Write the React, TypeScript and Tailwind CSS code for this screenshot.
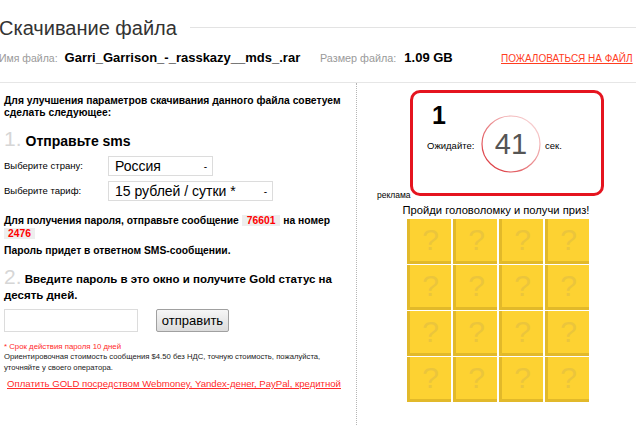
import React from "react";

const ari = { fontFamily: '"Liberation Sans", Arial, sans-serif' };

function Tile() {
  return (
    <div className="w-[44px] h-[45px] bg-[#fdd232] border-l-[3px] border-b-[3px] border-[#e2b92a] flex items-center justify-center">
      <span className="text-[30px] leading-none text-[#ebc53c]" style={ari}>?</span>
    </div>
  );
}

export default function App() {
  return (
    <div className="w-[640px] h-[425px] overflow-hidden bg-white text-black" style={ari}>
      <div className="flex items-center pt-[13px] h-[42px]">
        <div className="text-[20px] leading-none text-[#333] whitespace-nowrap ml-[-1px]">Скачивание файла</div>
        <div className="flex-1 h-px bg-[#e3e3e3] ml-[13px] mr-[4px]" />
      </div>
      <div className="flex items-baseline h-[40px] pt-[6px] whitespace-nowrap">
        <div className="w-[320px] flex items-baseline">
          <span className="text-[10.5px] text-[#9a9a9a] ml-[-1px]">Имя файла:</span>
          <span className="text-[13px] font-bold ml-[7px]">Garri_Garrison_-_rasskazy__mds_.rar</span>
        </div>
        <div className="w-[181px] flex items-baseline">
          <span className="text-[10.8px] text-[#9a9a9a]">Размер файла:</span>
          <span className="text-[13px] font-bold ml-[8px]">1.09 GB</span>
        </div>
        <a className="text-[10px] text-[#ff3d1f] underline">ПОЖАЛОВАТЬСЯ НА ФАЙЛ</a>
      </div>
      <div className="h-px bg-[#e6e6e6] mr-[4px]" />
      <div className="flex h-[342px]">
        <div className="w-[357px] border-r border-dotted border-[#b5b5b5] pl-[4px] pr-[10px] overflow-hidden">
          <p className="text-[10.3px] font-bold leading-[12px] mt-[12px]">
            Для улучшения параметров скачивания данного файла советуем сделать следующее:
          </p>
          <div className="flex items-baseline mt-[9px] h-[21px]">
            <span className="text-[21px] text-[#d6d6d6] leading-none">1.</span>
            <span className="text-[14px] font-bold ml-[4px] leading-none">Отправьте sms</span>
          </div>
          <div className="flex items-center mt-[7px] h-[20px]">
            <span className="text-[9.5px] w-[104px]">Выберите страну:</span>
            <div className="w-[105px] h-[20px] border border-[#dcdcdc] flex items-center justify-between pl-[6px] pr-[5px]">
              <span className="text-[14px]">Россия</span>
              <span className="text-[10px]">-</span>
            </div>
          </div>
          <div className="flex items-center mt-[5px] h-[20px]">
            <span className="text-[9.5px] w-[104px]">Выберите тариф:</span>
            <div className="w-[165px] h-[20px] border border-[#dcdcdc] flex items-center justify-between pl-[6px] pr-[5px]">
              <span className="text-[14px]">15 рублей / сутки *</span>
              <span className="text-[10px]">-</span>
            </div>
          </div>
          <p className="text-[10.3px] font-bold leading-[13px] mt-[13px]">
            Для получения пароля, отправьте сообщение{" "}
            <span className="bg-[#eeeeee] text-[#ff0000] px-[5px]">76601</span> на номер{" "}
            <span className="bg-[#eeeeee] text-[#ff0000] px-[4px]">2476</span>
          </p>
          <p className="text-[10.3px] font-bold leading-[13px] mt-[4px]">Пароль придет в ответном SMS-сообщении.</p>
          <div className="mt-[12px] text-[11.5px] font-bold leading-[16px]">
            <span className="text-[21px] text-[#d6d6d6] font-normal leading-[16px] align-[-1px]">2.</span>{" "}
            Введите пароль в это окно и получите Gold статус на десять дней.
          </div>
          <div className="flex items-center mt-[6px]">
            <div className="w-[134px] h-[23px] border border-[#dcdcdc]" />
            <button className="ml-[18px] w-[73px] h-[23px] border border-[#a0a0a0] rounded-[2px] bg-gradient-to-b from-[#f6f6f6] to-[#dcdcdc] text-[13px]">отправить</button>
          </div>
          <p className="text-[7.8px] text-[#ff2a2a] mt-[9px] leading-[11px]">* Срок действия пароля 10 дней</p>
          <p className="text-[7.7px] leading-[10.5px] text-[#222]">
            Ориентировочная стоимость сообщения $4.50 без НДС, точную стоимость, пожалуйста, уточняйте у своего оператора.
          </p>
          <div className="h-[17px] overflow-hidden mt-[4px] pl-[3px] mr-[-8px]">
            <a className="text-[9.6px] text-[#ff2a2a] underline leading-[14px] block">
              Оплатить GOLD посредством Webmoney, Yandex-денег, PayPal, кредитной картой и т.д.
            </a>
          </div>
        </div>
        <div className="flex-1 flex flex-col">
          <div className="ml-[53px] mt-[7px] w-[194px] h-[106px] border-[3px] border-[#e5141f] rounded-[10px] pl-[14px] pt-[10px]">
            <div className="text-[25px] font-bold leading-none ml-[5px]">1</div>
            <div className="flex items-center mt-[-9px]">
              <span className="text-[9.5px] w-[54px]">Ожидайте:</span>
              <div className="relative w-[60px] h-[58px] mt-[-4px] flex items-center justify-center">
                <svg className="absolute inset-0" width="60" height="58" viewBox="0 0 60 58">
                  <defs>
                    <linearGradient id="cg" x1="0" y1="1" x2="1" y2="0">
                      <stop offset="0" stopColor="#d9252c" />
                      <stop offset="0.5" stopColor="#ea8a8d" />
                      <stop offset="1" stopColor="#fbe5e6" />
                    </linearGradient>
                  </defs>
                  <ellipse cx="30" cy="29" rx="29" ry="28" fill="none" stroke="url(#cg)" strokeWidth="1.2" />
                </svg>
                <span className="text-[29px] text-[#555] leading-none">41</span>
              </div>
              <span className="text-[9.5px] ml-[4px]">сек.</span>
            </div>
          </div>
          <div className="text-[8.5px] ml-[20px] mt-[-5px] leading-none">реклама</div>
          <div className="text-[11.2px] text-center mr-[5px] mt-[3px] leading-[14px]">Пройди головоломку и получи приз!</div>
          <div className="ml-[50px] mt-[2px] grid grid-cols-4 gap-[1px] w-[183px]">
            {Array.from({ length: 16 }).map((_, i) => (
              <Tile key={i} />
            ))}
          </div>
        </div>
      </div>
    </div>
  );
}
